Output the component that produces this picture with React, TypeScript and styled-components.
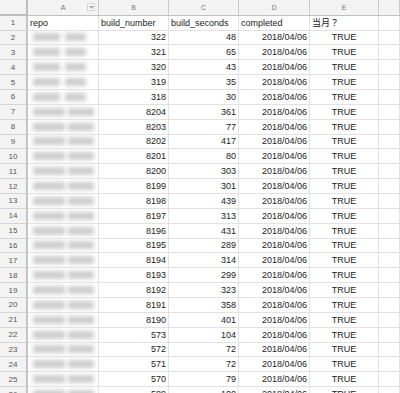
import styled, { createGlobalStyle } from "styled-components";

const GlobalStyle = createGlobalStyle`
  html, body {
    margin: 0;
    padding: 0;
    background: #ffffff;
  }
  body {
    width: 400px;
    height: 393px;
    overflow: hidden;
  }
`;

interface BuildRow {
  number: string;
  seconds: string;
  long: boolean;
}

const rows: BuildRow[] = [
  { number: "322", seconds: "48", long: false },
  { number: "321", seconds: "65", long: false },
  { number: "320", seconds: "43", long: false },
  { number: "319", seconds: "35", long: false },
  { number: "318", seconds: "30", long: false },
  { number: "8204", seconds: "361", long: true },
  { number: "8203", seconds: "77", long: true },
  { number: "8202", seconds: "417", long: true },
  { number: "8201", seconds: "80", long: true },
  { number: "8200", seconds: "303", long: true },
  { number: "8199", seconds: "301", long: true },
  { number: "8198", seconds: "439", long: true },
  { number: "8197", seconds: "313", long: true },
  { number: "8196", seconds: "431", long: true },
  { number: "8195", seconds: "289", long: true },
  { number: "8194", seconds: "314", long: true },
  { number: "8193", seconds: "299", long: true },
  { number: "8192", seconds: "323", long: true },
  { number: "8191", seconds: "358", long: true },
  { number: "8190", seconds: "401", long: true },
  { number: "573", seconds: "104", long: true },
  { number: "572", seconds: "72", long: true },
  { number: "571", seconds: "72", long: true },
  { number: "570", seconds: "79", long: true },
  { number: "589", seconds: "100", long: true },
];

const columns = ["A", "B", "C", "D", "E", ""];

export default function App() {
  return (
    <>
      <GlobalStyle />
      <Sheet>
        <Row $height={15.5}>
          <Corner />
          {columns.map((letter, i) => (
            <ColumnHeader key={i}>
              {letter}
              {letter === "A" && (
                <FilterButton>
                  <svg width="5" height="3" viewBox="0 0 5 3">
                    <path d="M0 0 L5 0 L2.5 3 Z" fill="#a8a8a8" />
                  </svg>
                </FilterButton>
              )}
            </ColumnHeader>
          ))}
        </Row>
        <Row $height={15}>
          <RowHeader>1</RowHeader>
          <Cell>repo</Cell>
          <Cell>build_number</Cell>
          <Cell>build_seconds</Cell>
          <Cell>completed</Cell>
          <Cell>当月？</Cell>
          <Cell />
        </Row>
        {rows.map((row, i) => (
          <Row key={i} $height={14.87}>
            <RowHeader>{i + 2}</RowHeader>
            <Cell>
              <Redacted $long={row.long}>
                <Smudge $width={row.long ? 32 : 27} />
                <Smudge $width={row.long ? 26 : 21} />
              </Redacted>
            </Cell>
            <Cell $align="right">{row.number}</Cell>
            <Cell $align="right">{row.seconds}</Cell>
            <Cell $align="right">2018/04/06</Cell>
            <Cell $align="center">TRUE</Cell>
            <Cell />
          </Row>
        ))}
      </Sheet>
    </>
  );
}

const Sheet = styled.div`
  width: 400px;
  height: 393px;
  overflow: hidden;
  font-family: "Liberation Sans", Arial, "Noto Sans CJK JP", sans-serif;
  color: #222;
`;

const Row = styled.div<{ $height: number }>`
  display: grid;
  grid-template-columns: 28px 71px 70px 70px 71px 69px 1fr;
  height: ${(p) => p.$height}px;
`;

const Corner = styled.div`
  background: #f3f3f3;
  border-right: 2px solid #bdbdbd;
  border-bottom: 2px solid #bdbdbd;
  box-sizing: border-box;
`;

const ColumnHeader = styled.div`
  position: relative;
  display: flex;
  align-items: center;
  justify-content: center;
  background: #f3f3f3;
  border-right: 1px solid #c9c9c9;
  border-bottom: 1px solid #c0c0c0;
  box-sizing: border-box;
  font-size: 7px;
  color: #777;
`;

const FilterButton = styled.span`
  position: absolute;
  right: 3px;
  top: 3px;
  width: 8px;
  height: 8px;
  box-sizing: border-box;
  border: 1px solid #d6d6d6;
  background: #f8f8f8;
  display: flex;
  align-items: center;
  justify-content: center;
`;

const RowHeader = styled.div`
  display: flex;
  align-items: center;
  justify-content: center;
  background: #f3f3f3;
  border-right: 2px solid #c4c4c4;
  border-bottom: 1px solid #d4d4d4;
  box-sizing: border-box;
  font-size: 8px;
  color: #555;
`;

const Cell = styled.div<{ $align?: "left" | "right" | "center" }>`
  display: flex;
  align-items: center;
  justify-content: ${(p) =>
    p.$align === "right" ? "flex-end" : p.$align === "center" ? "center" : "flex-start"};
  padding: 0 2px;
  border-right: 1px solid #e2e2e2;
  border-bottom: 1px solid #e2e2e2;
  box-sizing: border-box;
  font-size: 9px;
  white-space: nowrap;
  overflow: hidden;
`;

const Redacted = styled.div<{ $long: boolean }>`
  display: flex;
  gap: ${(p) => (p.$long ? 3 : 5)}px;
  padding-left: 3px;
`;

const Smudge = styled.span<{ $width: number }>`
  display: block;
  width: ${(p) => p.$width}px;
  height: 8px;
  background: #c4c4c4;
  filter: blur(2px);
  opacity: 0.85;
`;
